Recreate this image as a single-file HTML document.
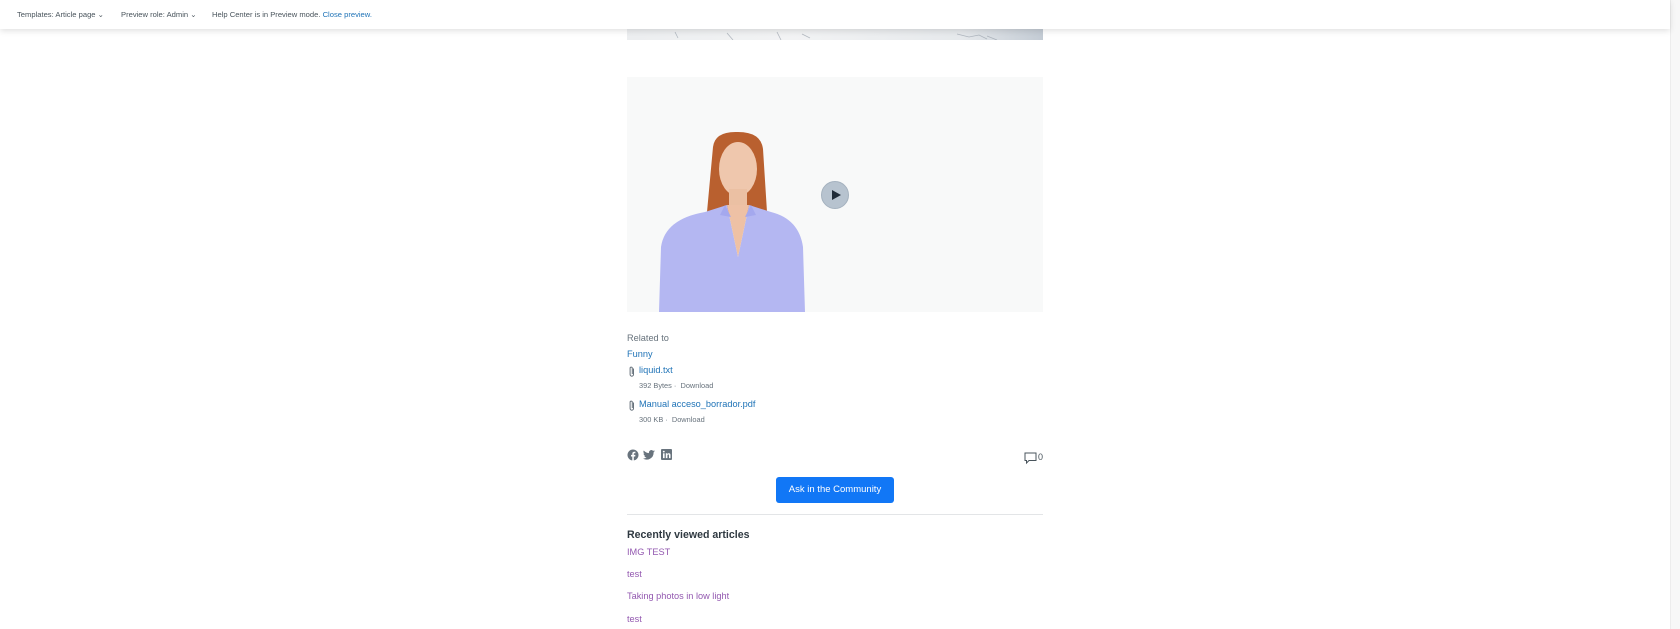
<!DOCTYPE html>
<html><head><meta charset="utf-8"><style>
*{margin:0;padding:0;box-sizing:border-box}
body{width:1680px;height:629px;overflow:hidden;background:#fff;font-family:"Liberation Sans",sans-serif;position:relative;color:#2f3941}
.a{position:absolute;white-space:nowrap}
.top{position:absolute;left:0;top:0;width:1670px;height:29px;background:#fff;box-shadow:0 2px 6px rgba(0,0,0,.12);z-index:5;font-size:7.6px;color:#49545c}
.top span{position:absolute;top:10px}
.blue{color:#1f73b7}
.sb{position:absolute;left:1670px;top:0;width:10px;height:629px;background:#f7f7f7;border-left:1px solid #ececec}
.th{position:absolute;left:1673px;top:364px;width:5px;height:265px;background:#c1c1c1;border-radius:3px}
.link{color:#1f73b7;font-size:9.2px}
.meta{color:#68737d;font-size:7.4px}
.pur{color:#9358b0;font-size:9.2px}
</style></head><body>
<div class="top">
<span style="left:17px">Templates: Article page ⌄</span>
<span style="left:121px">Preview role: Admin ⌄</span>
<span style="left:212px">Help Center is in Preview mode. <span class="blue" style="position:static">Close preview.</span></span>
</div>
<div class="sb"><div class="th"></div></div>
<div class="a" style="left:627px;top:29px;width:416px;height:11px;background:linear-gradient(90deg,#eceef0,#f2f3f4 40%,#e6e9ec 80%,#c3cbd4);overflow:hidden">
<svg width="416" height="11"><path d="M48 1l3 6M100 2l6 7M150 1l4 8M175 3l8 4M330 3l12 3l10-2l8 4M360 5l10 4" stroke="#9aa3ad" stroke-width=".8" fill="none" opacity=".7"/></svg></div>
<div class="a" style="left:627px;top:77px;width:416px;height:235px;background:#f8f9f9;overflow:hidden">
<svg width="416" height="235" style="position:absolute;left:0;top:0">
<path d="M86 70 Q88 54 111 55 Q134 55 136 72 L140 135 Q112 145 80 135 Z" fill="#b9602f"/>
<ellipse cx="111" cy="92" rx="19" ry="27" fill="#efc7ad"/>
<rect x="102" y="112" width="18" height="22" fill="#ebc0a3"/>
<path d="M32 235 L34 170 Q38 142 78 135 L100 128 L111 180 L122 128 L144 135 Q172 142 176 170 L178 235 Z" fill="#b4b7f2"/>
<path d="M100 128 L111 180 L122 128 Z" fill="#eec1a5"/>
<path d="M98 128 L93 138 L104 140 Z M124 128 L129 138 L118 140 Z" fill="#a4a8ee"/>
</svg>
<div class="a" style="left:194px;top:104px;width:28px;height:28px;border-radius:50%;background:#b7c3cf;border:1px solid #a5b2bf"></div>
<svg class="a" style="left:203px;top:112px" width="12" height="12"><path d="M2 1 L11 6 L2 11Z" fill="#1f2b38"/></svg>
</div>
<div class="a" style="left:627px;top:333px;font-size:9.2px;color:#68737d">Related to</div>
<div class="a link" style="left:627px;top:349px">Funny</div>
<svg class="a" style="left:628px;top:366px" width="8" height="11"><path d="M5.5 2.5v6a1.7 1.7 0 0 1-3.4 0V2.2a1.1 1.1 0 0 1 2.2 0v5.8" stroke="#68737d" stroke-width="1" fill="none"/></svg>
<div class="a link" style="left:639px;top:365px">liquid.txt</div>
<div class="a meta" style="left:639px;top:381px">392 Bytes · &nbsp;Download</div>
<svg class="a" style="left:628px;top:400px" width="8" height="11"><path d="M5.5 2.5v6a1.7 1.7 0 0 1-3.4 0V2.2a1.1 1.1 0 0 1 2.2 0v5.8" stroke="#68737d" stroke-width="1" fill="none"/></svg>
<div class="a link" style="left:639px;top:399px">Manual acceso_borrador.pdf</div>
<div class="a meta" style="left:639px;top:415px">300 KB · &nbsp;Download</div>
<svg class="a" style="left:627px;top:449px" width="12" height="12"><circle cx="6" cy="6" r="5.5" fill="#68737d"/><path d="M6.8 12V7.5h1.4l.2-1.6H6.8V5c0-.5.2-.8.8-.8h.8V2.8H7.3C6 2.8 5.3 3.6 5.3 4.8v1.1H4v1.6h1.3V12Z" fill="#fff"/></svg>
<svg class="a" style="left:643px;top:450px" width="12" height="10"><path d="M12 1.2c-.4.2-.9.3-1.4.4.5-.3.9-.8 1-1.3-.5.3-1 .5-1.5.6A2.4 2.4 0 0 0 6 3.1 6.9 6.9 0 0 1 .8.5a2.4 2.4 0 0 0 .8 3.2c-.4 0-.8-.1-1.1-.3 0 1.2.8 2.2 1.9 2.4-.4.1-.7.1-1.1 0 .3 1 1.2 1.7 2.3 1.7A4.9 4.9 0 0 1 0 8.5 6.9 6.9 0 0 0 10.6 2.6v-.3c.6-.3 1-.7 1.4-1.1Z" fill="#68737d"/></svg>
<svg class="a" style="left:661px;top:449px" width="11" height="11"><rect width="11" height="11" rx="1" fill="#68737d"/><rect x="2" y="4.3" width="1.6" height="4.8" fill="#fff"/><circle cx="2.8" cy="2.6" r=".9" fill="#fff"/><path d="M4.8 4.3h1.5V5c.3-.5.9-.8 1.6-.8 1.2 0 1.6.7 1.6 1.9v3H8V6.4c0-.6-.2-1-.7-1s-.9.4-.9 1v2.7H4.8Z" fill="#fff"/></svg>
<svg class="a" style="left:1024px;top:452px" width="13" height="13"><path d="M1 1h11v7.5H5L2.5 11V8.5H1Z" stroke="#49545c" stroke-width="1" fill="none"/></svg>
<div class="a" style="left:1038px;top:452px;font-size:9px;color:#49545c">0</div>
<div class="a" style="left:776px;top:477px;width:118px;height:26px;background:#1177f6;border-radius:3px;color:#fff;font-size:9.5px;text-align:center;line-height:26px">Ask in the Community</div>
<div class="a" style="left:627px;top:514px;width:416px;height:1px;background:#e3e5e7"></div>
<div class="a" style="left:627px;top:529px;font-size:10.6px;font-weight:bold;color:#2f3941">Recently viewed articles</div>
<div class="a pur" style="left:627px;top:547px">IMG TEST</div>
<div class="a pur" style="left:627px;top:569px">test</div>
<div class="a pur" style="left:627px;top:591px">Taking photos in low light</div>
<div class="a pur" style="left:627px;top:614px">test</div>
</body></html>
